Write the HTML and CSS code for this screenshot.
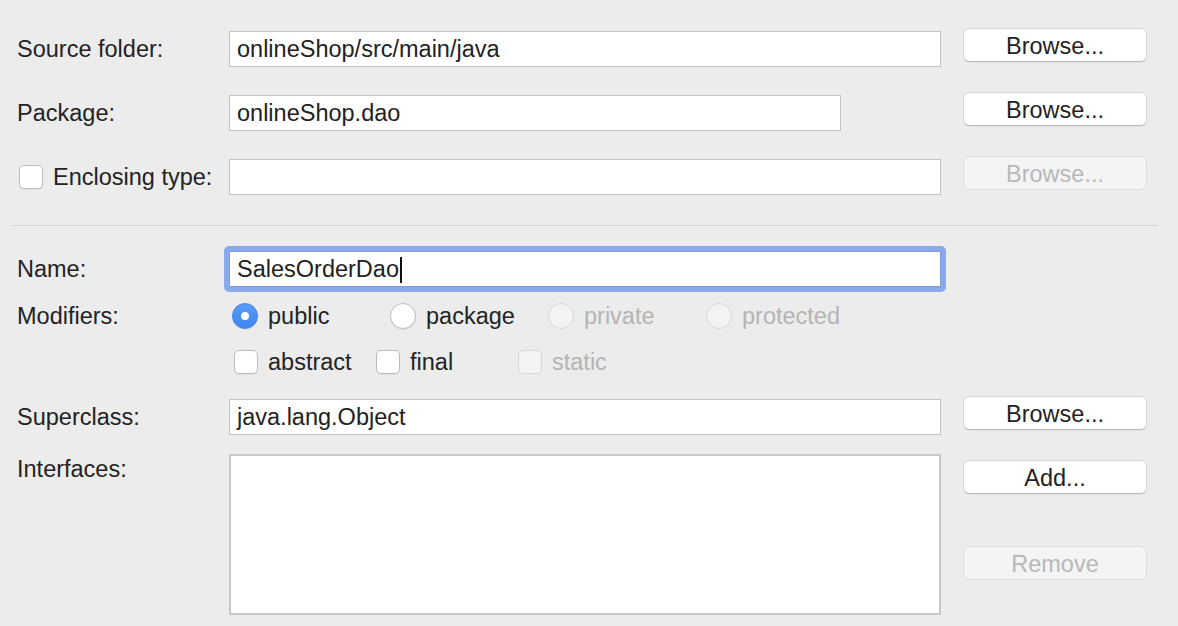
FILE: index.html
```html
<!DOCTYPE html>
<html>
<head>
<meta charset="utf-8">
<link rel="stylesheet" href="styles.css">
</head>
<body>
<div class="page">
  <div class="row r1">
    <div class="label">Source folder:</div>
    <div class="field wide"><span>onlineShop/src/main/java</span></div>
    <div class="btn">Browse...</div>
  </div>
  <div class="row r2">
    <div class="label">Package:</div>
    <div class="fieldcell"><div class="field pkg"><span>onlineShop.dao</span></div></div>
    <div class="btn">Browse...</div>
  </div>
  <div class="row r3">
    <div class="label enc"><span class="cb"></span><span>Enclosing type:</span></div>
    <div class="field wide"></div>
    <div class="btn disabled">Browse...</div>
  </div>

  <div class="sep"></div>

  <div class="row rname">
    <div class="label">Name:</div>
    <div class="ring"><div class="field focus"><span>SalesOrderDao</span><span class="caret"></span></div></div>
  </div>

  <div class="optrow rmod">
    <div class="label">Modifiers:</div>
    <div class="opts radios">
      <div class="opt"><span class="radio on"></span><span>public</span></div>
      <div class="opt"><span class="radio"></span><span>package</span></div>
      <div class="opt dis"><span class="radio"></span><span>private</span></div>
      <div class="opt dis"><span class="radio"></span><span>protected</span></div>
    </div>
  </div>

  <div class="optrow rchk">
    <div class="label"></div>
    <div class="opts checks">
      <div class="opt"><span class="cb"></span><span>abstract</span></div>
      <div class="opt"><span class="cb"></span><span>final</span></div>
      <div class="opt dis"><span class="cb"></span><span>static</span></div>
    </div>
  </div>

  <div class="row rsuper">
    <div class="label">Superclass:</div>
    <div class="field wide"><span>java.lang.Object</span></div>
    <div class="btn">Browse...</div>
  </div>

  <div class="row rint">
    <div class="label top">Interfaces:</div>
    <div class="list"></div>
    <div class="btncol">
      <div class="btn">Add...</div>
      <div class="btn disabled">Remove</div>
    </div>
  </div>
</div>
</body>
</html>
```

FILE: styles.css
```css
* { box-sizing: border-box; }
html, body {
  margin: 0;
  padding: 0;
  background: #ececec;
  font-family: "Liberation Sans", Arial, sans-serif;
  font-size: 23.5px;
  color: #232323;
}
.page {
  width: 1178px;
  height: 626px;
  overflow: hidden;
  padding-top: 28px;
}
.row {
  display: flex;
  align-items: flex-start;
}
.label {
  width: 229px;
  padding-left: 17px;
  height: 36px;
  margin-top: 3px;
  display: flex;
  align-items: center;
  white-space: nowrap;
}
.label.top {
  align-items: flex-start;
  height: auto;
  margin-top: 3px;
}
.label.enc {
  padding-left: 19px;
  gap: 10px;
}
.field {
  height: 36px;
  margin-top: 3px;
  background: #fff;
  border: 1px solid #c3c3c3;
  display: flex;
  align-items: center;
  padding-left: 7px;
  padding-top: 1px;
  white-space: nowrap;
  color: #222;
}
.field.wide { width: 712px; }
.fieldcell { width: 712px; }
.field.pkg { width: 612px; }
.btn {
  margin-left: 22px;
  width: 184px;
  height: 34px;
  padding-top: 2px;
  background: #fff;
  border: 1px solid #d6d6d6;
  border-bottom-color: #bdbdbd;
  border-radius: 6px;
  box-shadow: 0 1px 1px rgba(0,0,0,0.06);
  display: flex;
  align-items: center;
  justify-content: center;
  color: #232323;
}
.btn.disabled {
  background: #f4f4f4;
  border-color: #dedede;
  box-shadow: none;
  color: #b8b8b8;
}
.r2, .r3 { margin-top: 25px; }
.sep {
  margin: 30px 20px 0 12px;
  height: 1px;
  background: #d2d2d2;
}
.rname { margin-top: 20px; }
.rname .label { margin-top: 5px; }
.ring {
  width: 722px;
  height: 46px;
  margin-left: -5px;
  border: 4px solid #89a9ec;
  border-radius: 5px;
  background: #89a9ec;
}
.ring .field {
  margin: 1px 0 0 1px;
  width: 712px;
  height: 36px;
  border: 1px solid #7f9ee0;
}
.caret {
  display: inline-block;
  width: 2px;
  height: 26px;
  background: #111;
  margin-left: 1px;
}
.optrow {
  display: flex;
  align-items: center;
  height: 28px;
}
.optrow .label { margin-top: 0; height: 28px; }
.rmod { margin-top: 10px; }
.rchk { margin-top: 18px; }
.opts { display: flex; align-items: center; }
.radios { padding-left: 3px; }
.radios .opt { width: 158px; }
.checks { padding-left: 5px; }
.checks .opt { width: 142px; }
.opt {
  display: flex;
  align-items: center;
  gap: 10px;
  white-space: nowrap;
}
.opt.dis { color: #b4b4b4; }
.radio {
  width: 26px;
  height: 26px;
  border-radius: 50%;
  background: #fff;
  border: 1px solid #bdbdbd;
  box-shadow: 0 1px 1px rgba(0,0,0,0.06);
  flex: none;
  display: flex;
  align-items: center;
  justify-content: center;
}
.radio.on {
  background: linear-gradient(#5a9cf8, #3f85f4);
  border-color: #3a80ef;
}
.radio.on::after {
  content: "";
  width: 8px;
  height: 8px;
  border-radius: 50%;
  background: #fff;
}
.cb {
  width: 24px;
  height: 24px;
  border-radius: 5px;
  background: #fff;
  border: 1px solid #bdbdbd;
  box-shadow: 0 1px 1px rgba(0,0,0,0.06);
  flex: none;
  display: inline-block;
}
.dis .radio, .dis .cb {
  background: #f3f3f3;
  border-color: #d6d6d6;
  box-shadow: none;
}
.rsuper { margin-top: 20px; }
.rint { margin-top: 19px; }
.rint .label { margin-top: 0; padding-top: 2px; }
.list {
  width: 712px;
  height: 161px;
  background: #fff;
  border: 2px solid #c8c8c8;
}
.btncol {
  display: flex;
  flex-direction: column;
  gap: 52px;
  margin-top: 6px;
}
```
